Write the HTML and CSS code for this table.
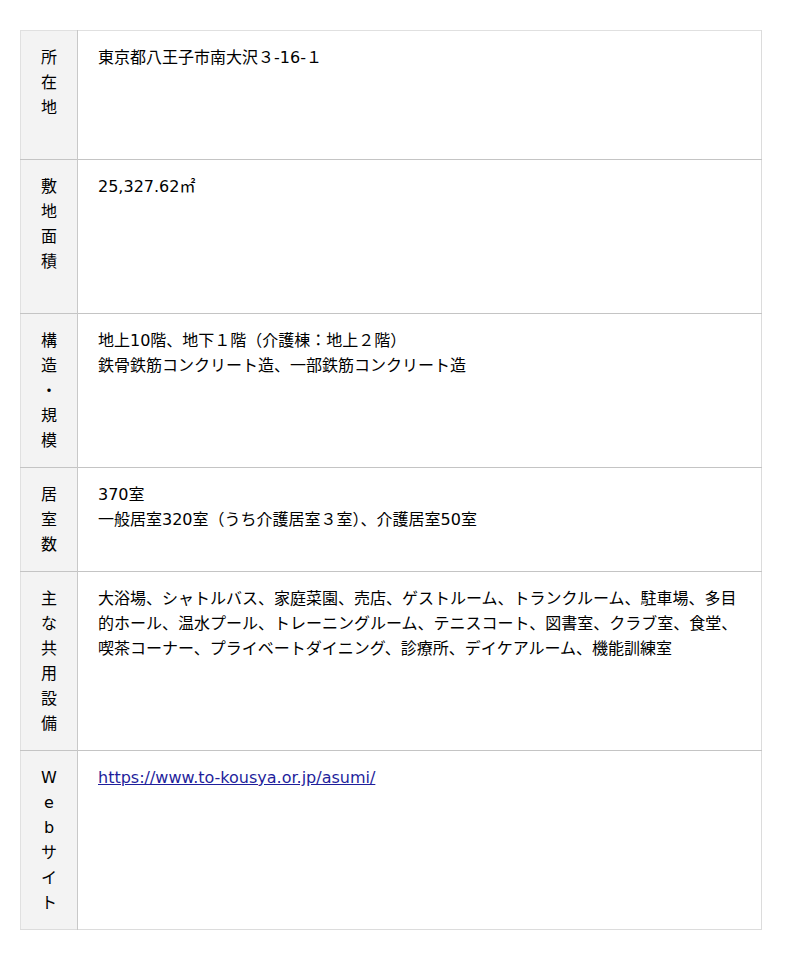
FILE: index.html
```html
<!DOCTYPE html>
<html lang="ja">
<head>
<meta charset="utf-8">
<title>概要</title>
<link rel="stylesheet" href="styles.css">
</head>
<body>
<table class="spec">
  <colgroup>
    <col class="col-label">
    <col class="col-value">
  </colgroup>
  <tbody>
    <tr class="row">
      <th class="label label-extra">所在地</th>
      <td class="value">東京都八王子市南大沢３-16-１</td>
    </tr>
    <tr class="row">
      <th class="label label-extra">敷地面積</th>
      <td class="value">25,327.62㎡</td>
    </tr>
    <tr class="row">
      <th class="label">構造・規模</th>
      <td class="value">地上10階、地下１階（介護棟：地上２階）<br>鉄骨鉄筋コンクリート造、一部鉄筋コンクリート造</td>
    </tr>
    <tr class="row">
      <th class="label">居室数</th>
      <td class="value">370室<br>一般居室320室（うち介護居室３室）、介護居室50室</td>
    </tr>
    <tr class="row">
      <th class="label">主な共用設備</th>
      <td class="value">大浴場、シャトルバス、家庭菜園、売店、ゲストルーム、トランクルーム、駐車場、多目的ホール、温水プール、トレーニングルーム、テニスコート、図書室、クラブ室、食堂、喫茶コーナー、プライベートダイニング、診療所、デイケアルーム、機能訓練室</td>
    </tr>
    <tr class="row">
      <th class="label">Webサイト</th>
      <td class="value"><a class="link" href="https://www.to-kousya.or.jp/asumi/">https://www.to-kousya.or.jp/asumi/</a></td>
    </tr>
  </tbody>
</table>
</body>
</html>
```

FILE: styles.css
```css
html, body {
  margin: 0;
  padding: 0;
  background: #fff;
}

body {
  font-family: "DejaVu Sans", "Noto Sans CJK JP", sans-serif;
  font-size: 16px;
  line-height: 25px;
  color: #000;
}

.spec {
  width: 742px;
  margin: 30px 0 0 20px;
  border-collapse: collapse;
  table-layout: fixed;
  border-top: 1px solid #e0e0e0;
  border-right: 1px solid #dcdcdc;
  border-left: 1px solid #e0e0e0;
}

.col-label {
  width: 57px;
}

.row {
  border-bottom: 1px solid #c4c4c4;
}

.row:last-child {
  border-bottom: 1px solid #dcdcdc;
}

.label {
  padding: 14px 20px;
  background: #f3f3f3;
  border-right: 1px solid #c8c8c8;
  font-weight: normal;
  text-align: center;
  vertical-align: top;
  word-break: break-all;
  line-break: anywhere;
}

.label-extra {
  padding-bottom: 39px;
}

.value {
  padding: 14px 20px;
  vertical-align: top;
  text-align: left;
}

.link {
  color: #1f1f9c;
  text-decoration: underline;
}
```
